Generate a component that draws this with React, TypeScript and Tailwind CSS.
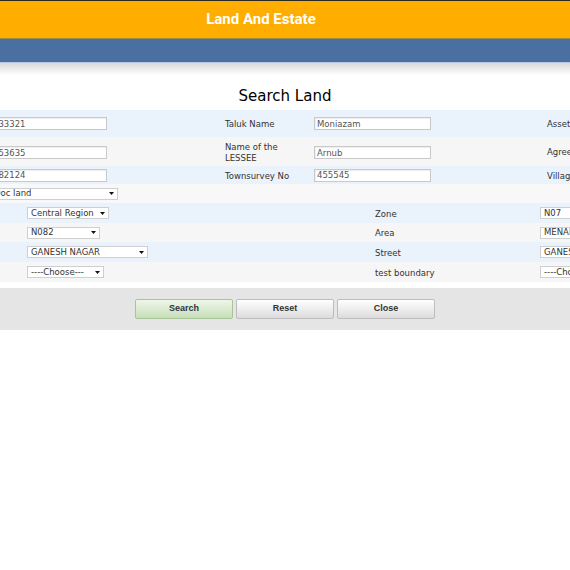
import React from "react";

const label = "text-[8.5px] leading-[11px] text-[#333] pl-[5px] pt-[2px]";

function TextBox({ value }: { value: string }) {
  return (
    <input
      readOnly
      value={value}
      className="block h-[13px] w-[117px] border border-[#c9c9c9] bg-white px-[2px] text-[8.5px] text-[#555] outline-none shadow-[inset_1px_1px_1px_rgba(0,0,0,0.07)]"
    />
  );
}

function Select({ value, width }: { value: string; width: string }) {
  return (
    <div
      className={`flex h-[12px] shrink-0 items-center justify-between border border-[#cfcfcf] bg-white pl-[3px] pr-[3px] text-[8.5px] text-[#333] ${width}`}
    >
      <span className="whitespace-nowrap overflow-hidden">{value}</span>
      <svg width="5" height="3" viewBox="0 0 5 3" className="shrink-0">
        <path d="M0 0h5L2.5 3z" fill="#111" />
      </svg>
    </div>
  );
}

const topCols = "grid grid-cols-[235px_89px_233px_89px_233px] items-center -ml-[15px] w-[879px]";
const lowCols = "grid grid-cols-[370px_165px_200px] items-center w-[735px]";

export default function App() {
  return (
    <div className="w-[570px] h-[570px] overflow-hidden bg-white font-['DejaVu_Sans',sans-serif]">
      {/* header */}
      <div className="h-px bg-[#2e2a20]" />
      <div className="h-[37px] bg-[#ffae00] flex items-center justify-center pr-[48px]">
        <span className="font-['Roboto',sans-serif] font-bold text-[15px] text-white">Land And Estate</span>
      </div>
      <div className="h-px bg-[#9c8a48]" />
      <div className="h-[23px] bg-[#4a6fa1]" />
      <div className="h-px bg-[#b9c7db]" />
      <div className="h-[12px] bg-gradient-to-b from-[#d8d8d8] to-white" />

      <div className="h-[35px] pt-[7px] flex items-center justify-center">
        <h1 className="text-[15px] text-black">Search Land</h1>
      </div>

      {/* first table */}
      <div className="bg-[#eaf2fc] h-[27px] flex items-center">
        <div className={topCols}>
          <div className="flex pl-[5px]"><TextBox value="833321" /></div>
          <div className={label}>Taluk Name</div>
          <div className="flex pl-[5px]"><TextBox value="Moniazam" /></div>
          <div className={label}>Asset Name</div>
          <div />
        </div>
      </div>
      <div className="bg-[#f6f6f6] h-[29px] flex items-center">
        <div className={topCols}>
          <div className="flex pl-[5px] pt-[2px]"><TextBox value="653635" /></div>
          <div className={label}>Name of the LESSEE</div>
          <div className="flex pl-[5px] pt-[2px]"><TextBox value="Arnub" /></div>
          <div className={label}>Agreement No</div>
          <div />
        </div>
      </div>
      <div className="bg-[#eaf2fc] h-[18px] flex items-center">
        <div className={topCols}>
          <div className="flex pl-[5px]"><TextBox value="482124" /></div>
          <div className={label}>Townsurvey No</div>
          <div className="flex pl-[5px]"><TextBox value="455545" /></div>
          <div className={label}>Village</div>
          <div />
        </div>
      </div>
      <div className="bg-[#f8f8f8] h-[19px] flex items-center">
        <div className={topCols}>
          <div className="flex pl-[5px]"><Select value="Doc land" width="w-[128px]" /></div>
        </div>
      </div>

      {/* second table */}
      {[
        { bg: "bg-[#eaf2fc]", h: "h-[20px]", left: "Central Region", lw: "w-[82px]", lab: "Zone", right: "N07" },
        { bg: "bg-[#f6f6f6]", h: "h-[19px]", left: "N082", lw: "w-[73px]", lab: "Area", right: "MENAMBEDU" },
        { bg: "bg-[#eaf2fc]", h: "h-[20px]", left: "GANESH NAGAR", lw: "w-[121px]", lab: "Street", right: "GANESH NAGAR" },
        { bg: "bg-[#f6f6f6]", h: "h-[20px]", left: "----Choose---", lw: "w-[77px]", lab: "test boundary", right: "----Choose---" },
      ].map((r) => (
        <div key={r.lab} className={`${r.bg} ${r.h} flex items-center`}>
          <div className={lowCols}>
            <div className="flex pl-[27px]"><Select value={r.left} width={r.lw} /></div>
            <div className={label}>{r.lab}</div>
            <div className="flex pl-[5px]"><Select value={r.right} width="w-[100px]" /></div>
          </div>
        </div>
      ))}

      {/* buttons */}
      <div className="mt-[6px] h-[42px] bg-[#e5e5e5] flex items-center justify-center gap-[3px] font-['Liberation_Sans',sans-serif]">
        <button className="w-[98px] h-[20px] rounded-[2px] border border-[#a8c59a] bg-gradient-to-b from-[#eef6e9] to-[#c8dfba] text-[9px] font-bold text-[#2c3440]">
          Search
        </button>
        <button className="w-[98px] h-[20px] rounded-[2px] border border-[#bdbdbd] bg-gradient-to-b from-white to-[#dcdcdc] text-[9px] font-bold text-[#333]">
          Reset
        </button>
        <button className="w-[98px] h-[20px] rounded-[2px] border border-[#bdbdbd] bg-gradient-to-b from-white to-[#dcdcdc] text-[9px] font-bold text-[#333]">
          Close
        </button>
      </div>
    </div>
  );
}
